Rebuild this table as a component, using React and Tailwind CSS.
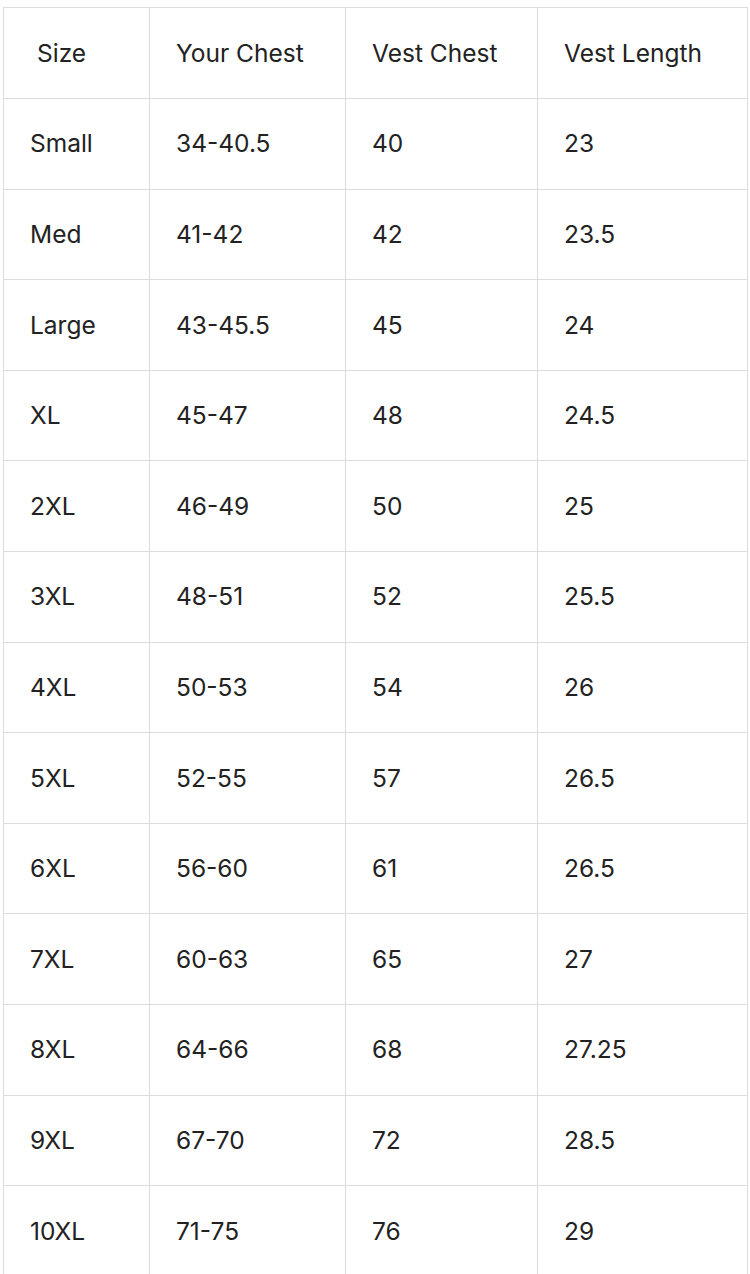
const rows = [
	['Small', '34-40.5', '40', '23'],
	['Med', '41-42', '42', '23.5'],
	['Large', '43-45.5', '45', '24'],
	['XL', '45-47', '48', '24.5'],
	['2XL', '46-49', '50', '25'],
	['3XL', '48-51', '52', '25.5'],
	['4XL', '50-53', '54', '26'],
	['5XL', '52-55', '57', '26.5'],
	['6XL', '56-60', '61', '26.5'],
	['7XL', '60-63', '65', '27'],
	['8XL', '64-66', '68', '27.25'],
	['9XL', '67-70', '72', '28.5'],
	['10XL', '71-75', '76', '29'],
];

const App = () => {
	return (
		<div className="bg-white min-h-screen pt-[7px] pl-[3px] text-[#222] font-['Inter',sans-serif]">
			<table className="border-collapse w-[744px] table-fixed text-[24.5px]">
				<colgroup>
					<col className="w-[146px]" />
					<col className="w-[196px]" />
					<col className="w-[192px]" />
					<col className="w-[210px]" />
				</colgroup>
				<thead>
					<tr className="h-[91px]">
						<th className="border border-[#dcdcdc] text-left font-normal pl-[33px]">Size</th>
						<th className="border border-[#dcdcdc] text-left font-normal pl-[26px]">Your Chest</th>
						<th className="border border-[#dcdcdc] text-left font-normal pl-[26px]">Vest Chest</th>
						<th className="border border-[#dcdcdc] text-left font-normal pl-[26px]">Vest Length</th>
					</tr>
				</thead>
				<tbody>
					{rows.map((row) => (
						<tr key={row[0]} className="h-[90.6px]">
							{row.map((cell, i) => (
								<td key={i} className="border border-[#dcdcdc] pl-[26px]">
									{cell}
								</td>
							))}
						</tr>
					))}
				</tbody>
			</table>
		</div>
	);
};

export default App;
